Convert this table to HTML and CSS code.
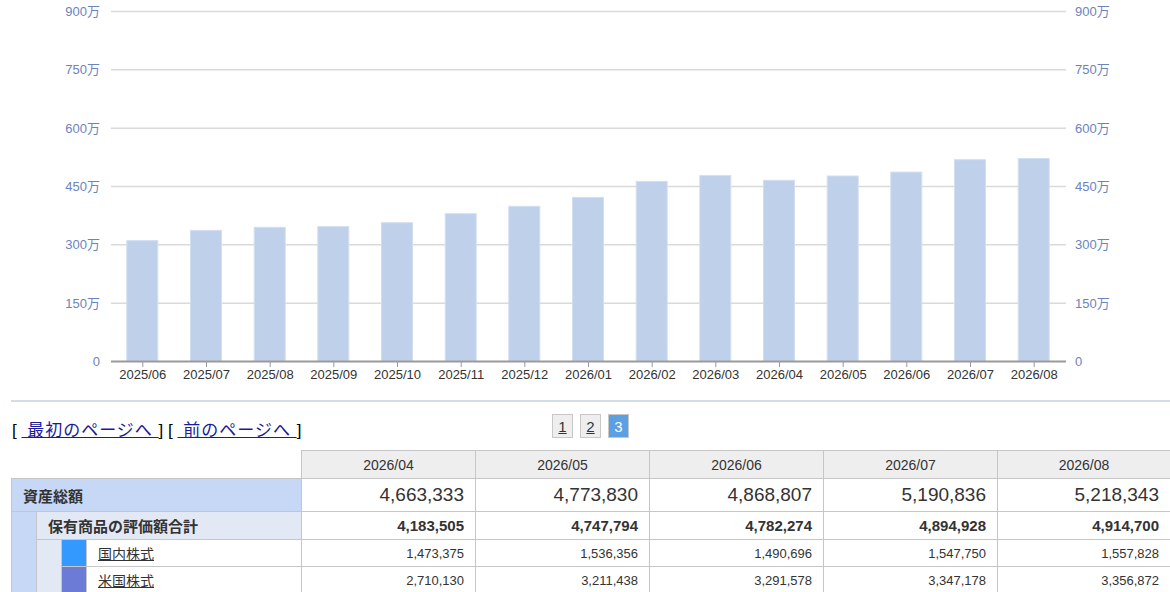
FILE: index.html
```html
<!DOCTYPE html>
<html lang="ja">
<head>
<meta charset="utf-8">
<title>資産推移</title>
<link rel="stylesheet" href="styles.css">
</head>
<body>
<div class="chart">
<svg class="chart-svg" width="1170" height="400" viewBox="0 0 1170 400">
  <g class="grid">
    <line x1="111" y1="11.5" x2="1066" y2="11.5"/>
    <line x1="111" y1="69.8" x2="1066" y2="69.8"/>
    <line x1="111" y1="128.2" x2="1066" y2="128.2"/>
    <line x1="111" y1="186.5" x2="1066" y2="186.5"/>
    <line x1="111" y1="244.8" x2="1066" y2="244.8"/>
    <line x1="111" y1="303.2" x2="1066" y2="303.2"/>
  </g>
  <g class="ylab-l">
    <text x="100" y="12.5">900万</text>
    <text x="100" y="70.5">750万</text>
    <text x="100" y="129.5">600万</text>
    <text x="100" y="187.5">450万</text>
    <text x="100" y="245.5">300万</text>
    <text x="100" y="304.5">150万</text>
    <text x="100" y="362.5">0</text>
  </g>
  <g class="ylab-r">
    <text x="1075" y="12.5">900万</text>
    <text x="1075" y="70.5">750万</text>
    <text x="1075" y="129.5">600万</text>
    <text x="1075" y="187.5">450万</text>
    <text x="1075" y="245.5">300万</text>
    <text x="1075" y="304.5">150万</text>
    <text x="1075" y="362.5">0</text>
  </g>
  <g class="bars">
    <rect x="126.8" y="240.6" width="31" height="120.4"/>
    <rect x="190.5" y="230.4" width="31" height="130.6"/>
    <rect x="254.2" y="227.3" width="31" height="133.7"/>
    <rect x="317.8" y="226.6" width="31" height="134.4"/>
    <rect x="381.5" y="222.7" width="31" height="138.3"/>
    <rect x="445.2" y="213.7" width="31" height="147.3"/>
    <rect x="508.8" y="206.3" width="31" height="154.7"/>
    <rect x="572.5" y="197.4" width="31" height="163.6"/>
    <rect x="636.2" y="181.4" width="31" height="179.6"/>
    <rect x="699.8" y="175.6" width="31" height="185.4"/>
    <rect x="763.5" y="180.3" width="31" height="180.7"/>
    <rect x="827.2" y="176.0" width="31" height="185.0"/>
    <rect x="890.8" y="172.1" width="31" height="188.9"/>
    <rect x="954.5" y="159.7" width="31" height="201.3"/>
    <rect x="1018.2" y="158.5" width="31" height="202.5"/>
  </g>
  <line class="axis" x1="111" y1="361.5" x2="1066" y2="361.5"/>
  <g class="ticks">
    <line x1="142.8" y1="362" x2="142.8" y2="367"/>
    <line x1="206.5" y1="362" x2="206.5" y2="367"/>
    <line x1="270.2" y1="362" x2="270.2" y2="367"/>
    <line x1="333.8" y1="362" x2="333.8" y2="367"/>
    <line x1="397.5" y1="362" x2="397.5" y2="367"/>
    <line x1="461.2" y1="362" x2="461.2" y2="367"/>
    <line x1="524.8" y1="362" x2="524.8" y2="367"/>
    <line x1="588.5" y1="362" x2="588.5" y2="367"/>
    <line x1="652.2" y1="362" x2="652.2" y2="367"/>
    <line x1="715.8" y1="362" x2="715.8" y2="367"/>
    <line x1="779.5" y1="362" x2="779.5" y2="367"/>
    <line x1="843.2" y1="362" x2="843.2" y2="367"/>
    <line x1="906.8" y1="362" x2="906.8" y2="367"/>
    <line x1="970.5" y1="362" x2="970.5" y2="367"/>
    <line x1="1034.2" y1="362" x2="1034.2" y2="367"/>
  </g>
  <g class="xlab">
    <text x="142.8" y="375.5">2025/06</text>
    <text x="206.5" y="375.5">2025/07</text>
    <text x="270.2" y="375.5">2025/08</text>
    <text x="333.8" y="375.5">2025/09</text>
    <text x="397.5" y="375.5">2025/10</text>
    <text x="461.2" y="375.5">2025/11</text>
    <text x="524.8" y="375.5">2025/12</text>
    <text x="588.5" y="375.5">2026/01</text>
    <text x="652.2" y="375.5">2026/02</text>
    <text x="715.8" y="375.5">2026/03</text>
    <text x="779.5" y="375.5">2026/04</text>
    <text x="843.2" y="375.5">2026/05</text>
    <text x="906.8" y="375.5">2026/06</text>
    <text x="970.5" y="375.5">2026/07</text>
    <text x="1034.2" y="375.5">2026/08</text>
  </g>
</svg>
</div>
<div class="sep"></div>
<div class="pager">
  <div class="pager-links"><span class="br">[</span> <a href="#" class="plink">&nbsp;最初のページへ&nbsp;</a><span class="br">]</span> <span class="br">[</span> <a href="#" class="plink">&nbsp;前のページへ&nbsp;</a><span class="br">]</span></div>
  <div class="pages">
    <a href="#" class="pg">1</a>
    <a href="#" class="pg">2</a>
    <span class="pg pg-active">3</span>
  </div>
  <div></div>
</div>
<table class="tbl">
  <colgroup>
    <col class="c-s"><col class="c-s"><col class="c-s"><col class="c-label">
    <col class="c-v"><col class="c-v"><col class="c-v"><col class="c-v"><col class="c-vl">
  </colgroup>
  <thead>
    <tr>
      <th colspan="4" class="corner"></th>
      <th>2026/04</th><th>2026/05</th><th>2026/06</th><th>2026/07</th><th>2026/08</th>
    </tr>
  </thead>
  <tbody>
    <tr class="r-total">
      <td colspan="4" class="total-label">資産総額</td>
      <td class="num">4,663,333</td><td class="num">4,773,830</td><td class="num">4,868,807</td><td class="num">5,190,836</td><td class="num">5,218,343</td>
    </tr>
    <tr class="r-sub">
      <td rowspan="3" class="blue-sp"></td>
      <td colspan="3" class="sub-label">保有商品の評価額合計</td>
      <td class="num">4,183,505</td><td class="num">4,747,794</td><td class="num">4,782,274</td><td class="num">4,894,928</td><td class="num">4,914,700</td>
    </tr>
    <tr class="r-item">
      <td rowspan="2" class="gray-sp"></td>
      <td class="sw sw-jp"></td>
      <td class="item-label"><a href="#">国内株式</a></td>
      <td class="num">1,473,375</td><td class="num">1,536,356</td><td class="num">1,490,696</td><td class="num">1,547,750</td><td class="num">1,557,828</td>
    </tr>
    <tr class="r-item">
      <td class="sw sw-us"></td>
      <td class="item-label"><a href="#">米国株式</a></td>
      <td class="num">2,710,130</td><td class="num">3,211,438</td><td class="num">3,291,578</td><td class="num">3,347,178</td><td class="num">3,356,872</td>
    </tr>
  </tbody>
</table>
</body>
</html>
```
FILE: styles.css
```css
html, body {
  margin: 0;
  padding: 0;
  background: #fff;
  overflow: hidden;
}
body {
  font-family: "Liberation Sans", "Noto Sans CJK JP", sans-serif;
  color: #333;
  width: 1170px;
}
.chart {
  height: 400px;
}
.chart-svg {
  display: block;
}
.grid line {
  stroke: #dadada;
  stroke-width: 1.6;
}
.ylab-l text, .ylab-r text {
  font-family: "Liberation Sans", "Noto Sans CJK JP", sans-serif;
  font-size: 13px;
  fill: #6c84bd;
  dominant-baseline: middle;
}
.ylab-l text { text-anchor: end; }
.ylab-r text { text-anchor: start; }
.bars rect {
  fill: #bfd0eb;
  stroke: #d3def2;
  stroke-width: 1;
}
.axis {
  stroke: #9a9a9a;
  stroke-width: 2;
}
.ticks line {
  stroke: #9a9a9a;
  stroke-width: 1;
}
.xlab text {
  font-family: "Liberation Sans", sans-serif;
  font-size: 13px;
  fill: #333;
  text-anchor: middle;
  dominant-baseline: middle;
}
.sep {
  margin-left: 11px;
  border-top: 2px solid #d3dde9;
}
.pager {
  display: grid;
  grid-template-columns: 1fr auto 1fr;
  align-items: end;
  margin-left: 11px;
  padding-top: 12px;
  height: 25px;
}
.pager-links {
  font-size: 17px;
  line-height: 20px;
  padding-left: 1px;
  margin-bottom: -2px;
  white-space: nowrap;
  color: #000;
}
.br {
  color: #000;
}
.plink {
  color: #1a1a9c;
  text-decoration: underline;
  letter-spacing: 1px;
}
.pages {
  display: flex;
  gap: 7px;
  align-self: start;
}
.pg {
  display: flex;
  align-items: center;
  justify-content: center;
  box-sizing: border-box;
  width: 21px;
  height: 24px;
  border: 1px solid #c8c8c8;
  background: #eeeeee;
  color: #333;
  font-size: 15px;
  text-decoration: underline;
}
.pg-active {
  background: #5aa0e2;
  color: #fff;
  text-decoration: none;
}
.tbl {
  margin-left: 11px;
  margin-top: 11px;
  border-collapse: collapse;
  table-layout: fixed;
  width: 1159px;
}
.c-s { width: 25px; }
.c-label { width: 215px; }
.c-v { width: 174px; }
.c-vl { width: 173px; }
.tbl th, .tbl td {
  border: 1px solid #c6c6c6;
  padding: 0 11px;
  white-space: nowrap;
  overflow: hidden;
}
.tbl th {
  background: #eeeeee;
  font-weight: normal;
  font-size: 14px;
  height: 27px;
  text-align: center;
  color: #333;
}
.tbl th.corner {
  background: transparent;
  border-top: hidden;
  border-left: hidden;
}
.num {
  text-align: right;
}
.r-total td {
  height: 32px;
}
.r-total .num {
  font-size: 19px;
  color: #333;
}
.total-label {
  background: #c6d8f6;
  font-weight: bold;
  font-size: 15px;
  border-bottom: hidden;
}
.r-sub td {
  height: 27px;
}
.r-sub .num {
  font-weight: bold;
  font-size: 15px;
}
.blue-sp {
  background: #c6d8f6;
  border-top: hidden;
}
.sub-label {
  background: #e3e9f4;
  font-weight: bold;
  font-size: 15px;
}
.gray-sp {
  background: #e3e9f4;
  border-top: hidden;
}
.r-item td {
  height: 26px;
}
.r-item .num {
  font-size: 13px;
}
.tbl td.sw {
  padding: 0;
}
.sw-jp { background: #3399ff; }
.sw-us { background: #6b7bd6; }
.item-label {
  font-size: 14px;
}
.item-label a {
  color: #333;
  text-decoration: underline;
}
```
